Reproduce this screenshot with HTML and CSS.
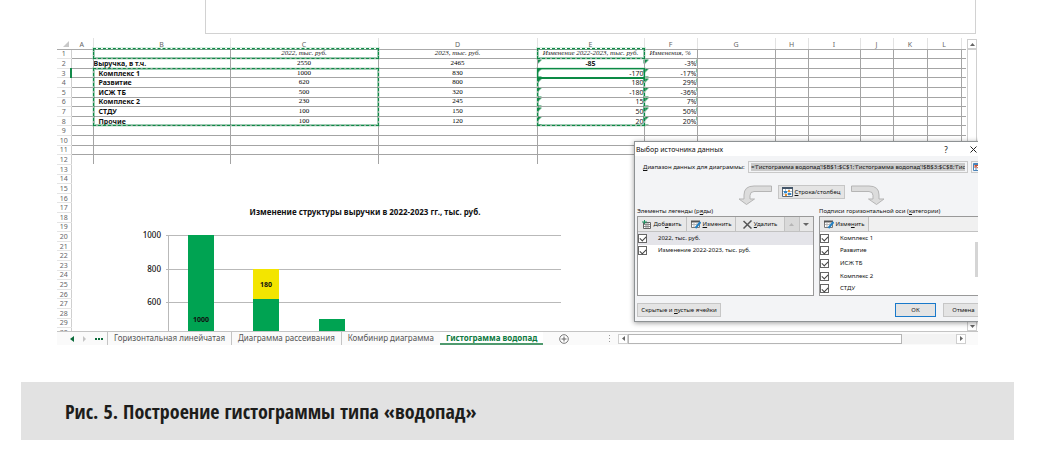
FILE: index.html
```html
<!DOCTYPE html>
<html lang="ru">
<head>
<meta charset="utf-8">
<title>Построение гистограммы типа «водопад»</title>
<link rel="stylesheet" href="styles.css">
</head>
<body>
<div class="formula-area"></div>
<figure class="figure">
  <div class="window">
    <div class="sheet">
      <div class="cells">
        <table class="grid">
          <colgroup><col class="w-n"><col class="w-a"><col class="w-b"><col class="w-c"><col class="w-d"><col class="w-e"><col class="w-f"><col class="w-g"><col class="w-h"><col class="w-i"><col class="w-j"><col class="w-k"><col class="w-l"><col class="w-m"></colgroup>
          <thead>
            <tr><th class="corner"><svg width="6" height="6" viewBox="0 0 6 6"><path d="M6 0v6H0z" fill="#c8c8c8"/></svg></th><th>A</th><th>B</th><th>C</th><th>D</th><th>E</th><th>F</th><th>G</th><th>H</th><th>I</th><th>J</th><th>K</th><th>L</th><th></th></tr>
          </thead>
          <tbody class="ruled">
            <tr><th>1</th><td></td><td></td><td class="head">2022, тыс. руб.</td><td class="head">2023, тыс. руб.</td><td class="head">Изменение 2022-2023, тыс. руб.</td><td class="head start">Изменения, %</td><td></td><td></td><td></td><td></td><td></td><td></td><td></td></tr>
            <tr><th>2</th><td></td><td class="name total">Выручка, в т.ч.</td><td class="num">2550</td><td class="num">2465</td><td class="err mid">-85</td><td class="err val">-3%</td><td></td><td></td><td></td><td></td><td></td><td></td><td></td></tr>
            <tr><th class="current">3</th><td></td><td class="name">Комплекс 1</td><td class="num">1000</td><td class="num">830</td><td class="err val">-170</td><td class="err val">-17%</td><td></td><td></td><td></td><td></td><td></td><td></td><td></td></tr>
            <tr><th>4</th><td></td><td class="name">Развитие</td><td class="num">620</td><td class="num">800</td><td class="err val">180</td><td class="err val">29%</td><td></td><td></td><td></td><td></td><td></td><td></td><td></td></tr>
            <tr><th>5</th><td></td><td class="name">ИСЖ ТБ</td><td class="num">500</td><td class="num">320</td><td class="err val">-180</td><td class="err val">-36%</td><td></td><td></td><td></td><td></td><td></td><td></td><td></td></tr>
            <tr><th>6</th><td></td><td class="name">Комплекс 2</td><td class="num">230</td><td class="num">245</td><td class="err val">15</td><td class="err val">7%</td><td></td><td></td><td></td><td></td><td></td><td></td><td></td></tr>
            <tr><th>7</th><td></td><td class="name">СТДУ</td><td class="num">100</td><td class="num">150</td><td class="err val">50</td><td class="err val">50%</td><td></td><td></td><td></td><td></td><td></td><td></td><td></td></tr>
            <tr><th>8</th><td></td><td class="name">Прочие</td><td class="num">100</td><td class="num">120</td><td class="err val">20</td><td class="err val">20%</td><td></td><td></td><td></td><td></td><td></td><td></td><td></td></tr>
            <tr><th>9</th><td></td><td></td><td></td><td></td><td></td><td></td><td></td><td></td><td></td><td></td><td></td><td></td><td></td></tr>
            <tr><th>10</th><td></td><td></td><td></td><td></td><td></td><td></td><td></td><td></td><td></td><td></td><td></td><td></td><td></td></tr>
            <tr><th>11</th><td></td><td></td><td></td><td></td><td></td><td></td><td></td><td></td><td></td><td></td><td></td><td></td><td></td></tr>
            <tr class="last"><th>12</th><td></td><td></td><td></td><td></td><td></td><td></td><td></td><td></td><td></td><td></td><td></td><td></td><td></td></tr>
          </tbody>
          <tbody>
            <tr><th>13</th><td colspan="13"></td></tr>
            <tr><th>14</th><td colspan="13"></td></tr>
            <tr><th>15</th><td colspan="13"></td></tr>
            <tr><th>16</th><td colspan="13"></td></tr>
            <tr><th>17</th><td colspan="13"></td></tr>
            <tr><th>18</th><td colspan="13"></td></tr>
            <tr><th>19</th><td colspan="13"></td></tr>
            <tr><th>20</th><td colspan="13"></td></tr>
            <tr><th>21</th><td colspan="13"></td></tr>
            <tr><th>22</th><td colspan="13"></td></tr>
            <tr><th>23</th><td colspan="13"></td></tr>
            <tr><th>24</th><td colspan="13"></td></tr>
            <tr><th>25</th><td colspan="13"></td></tr>
            <tr><th>26</th><td colspan="13"></td></tr>
            <tr><th>27</th><td colspan="13"></td></tr>
            <tr><th>28</th><td colspan="13"></td></tr>
            <tr><th>29</th><td colspan="13"></td></tr>
            <tr><th>30</th><td colspan="13"></td></tr>
          </tbody>
        </table>
        <span class="marquee names-head"></span>
        <span class="marquee names-body"></span>
        <span class="marquee values-head"></span>
        <span class="marquee values-body"></span>
        <span class="active-cell"></span>
        <svg class="chart" width="441" height="131" viewBox="0 0 441 131">
          <g fill="#b9b9b9"><rect x="36" y="35" width="395" height="1"/><rect x="36" y="69" width="395" height="1"/><rect x="36" y="102" width="395" height="1"/><rect x="38" y="35" width="1" height="96"/></g>
          <g fill="#00a352"><rect x="58" y="35" width="26" height="96"/><rect x="123" y="99" width="26" height="32"/><rect x="189" y="119" width="26" height="12"/></g>
          <rect x="123" y="69" width="26" height="30" fill="#f3e500"/>
          <text class="chart-title" x="235" y="15">Изменение структуры выручки в 2022-2023 гг., тыс. руб.</text>
          <g class="axis"><text x="31" y="38">1000</text><text x="31" y="72">800</text><text x="31" y="105">600</text></g>
          <g class="bar-label"><text x="71" y="122">1000</text><text x="136" y="87">180</text></g>
        </svg>
      </div>
      <div class="vscroll">
        <button type="button" aria-label="Вверх"><svg width="5" height="3" viewBox="0 0 5 3"><path d="M0 3h5L2.500 0z"/></svg></button>
        <span class="vthumb"></span>
        <button type="button" aria-label="Вниз"><svg width="5" height="3" viewBox="0 0 5 3"><path d="M0 0h5L2.500 3z"/></svg></button>
      </div>
    </div>

    <nav class="tabs">
      <div class="tab-nav">
        <svg width="4" height="6" viewBox="0 0 4 6"><path d="M4 0v6L0 3z" fill="#0b6b3a"/></svg>
        <svg width="3" height="6" viewBox="0 0 3 6"><path d="M0 0v6l3-3z" fill="#c4c4c4"/></svg>
        <svg width="8" height="2" viewBox="0 0 8 2"><path d="M0 0h2v2H0zM3 0h2v2H3zM6 0h2v2H6z" fill="#0b6b3a"/></svg>
      </div>
      <button type="button" class="tab">Горизонтальная линейчатая</button>
      <button type="button" class="tab">Диаграмма рассеивания</button>
      <button type="button" class="tab">Комбинир диаграмма</button>
      <button type="button" class="tab selected">Гистограмма водопад</button>
      <button type="button" class="add" aria-label="Новый лист"><svg width="10" height="10" viewBox="0 0 10 10"><circle cx="5" cy="5" r="4.300" fill="#fff" stroke="#777"/><path d="M5 2.500v5M2.500 5h5" stroke="#666"/></svg></button>
      <svg class="grip" width="2" height="8" viewBox="0 0 2 8"><path d="M0 0h1v1H0zM0 3h1v1H0zM0 6h1v1H0z" fill="#999"/></svg>
      <div class="hscroll">
        <button type="button" aria-label="Влево"><svg width="3" height="5" viewBox="0 0 3 5"><path d="M3 0v5L0 2.500z"/></svg></button>
        <span class="hthumb"></span><span class="htrack"></span>
        <button type="button" aria-label="Вправо"><svg width="3" height="5" viewBox="0 0 3 5"><path d="M0 0v5l3-2.500z"/></svg></button>
      </div>
    </nav>

    <section class="dialog" role="dialog" aria-labelledby="dlg-title">
      <header class="titlebar">
        <h2 id="dlg-title">Выбор источника данных</h2>
        <button type="button" class="help">?</button>
        <button type="button" class="close" aria-label="Закрыть"><svg width="7" height="7" viewBox="0 0 7 7"><path d="M.5.5l6 6M6.500.5l-6 6" stroke="#222" fill="none"/></svg></button>
      </header>
      <div class="range">
        <label for="range"><u>Д</u>иапазон данных для диаграммы:</label>
        <input id="range" type="text" value="='Гистограмма водопад'!$B$1:$C$1;'Гистограмма водопад'!$B$3:$C$8;'Гистограмма водопад'!$E$1">
        <button type="button" class="pick" aria-label="Выбрать диапазон"><svg width="9" height="8" viewBox="0 0 9 8"><path d="M.5.5h8v7h-8z" fill="#fff" stroke="#4a83b8"/><path d="M.5 1.500h8M3 1v6M6 1v6" stroke="#4a83b8"/><path d="M2 2.500l4 3.500M2 2v3M2 2.500h3" stroke="#d4502a" fill="none"/></svg></button>
      </div>
      <div class="switch">
        <svg width="34" height="21" viewBox="0 0 34 21"><path d="M33.500 2v5.500H16q-4 0-4 4V15h4.500L8.500 20.500 1 15h5v-4Q6 2 16 2z" fill="#dcdcdc" stroke="#b5b5b5"/></svg>
        <button type="button" class="btn"><svg width="11" height="10" viewBox="0 0 11 10"><path d="M.5.5h10v9H.5z" fill="#fff" stroke="#5a6b7b"/><path d="M0 1h11" stroke="#44566a" stroke-width="2"/><path d="M1 4.500h9M1 7h9M3.500 2v7M7 2v7" stroke="#a9bac8"/><path d="M2 4h3v2H2zM6 6h3v2H6z" fill="#3187c8"/><path d="M6 3h2v2H6zM3 7h2v2H3z" fill="#e6902e"/></svg><span><u>С</u>трока/столбец</span></button>
        <svg width="34" height="21" viewBox="0 0 34 21"><path d="M.5 2v5.500H18q4 0 4 4V15h-4.500l8 5.500L33 15h-5v-4Q28 2 18 2z" fill="#dcdcdc" stroke="#b5b5b5"/></svg>
      </div>
      <div class="lists">
        <div class="pane left">
          <h3>Элементы легенды (р<u>я</u>ды)</h3>
          <div class="box">
            <div class="tools">
              <button type="button" class="tool wide"><svg width="9" height="9" viewBox="0 0 9 9"><path d="M1.500 2.500h7v6h-7z" fill="#fff" stroke="#666"/><path d="M2 4.500h6M2 6.500h6M4 3v5M6 3v5" stroke="#8b8b8b"/><path d="M0 2h5M2.500 0v4" stroke="#1f9463"/></svg><span>Доб<u>а</u>вить</span></button>
              <button type="button" class="tool wide"><svg width="10" height="9" viewBox="0 0 10 9"><path d="M.5 1.500h8v6h-8z" fill="#fff" stroke="#777"/><path d="M0 1.500h9" stroke="#555" stroke-width="2"/><path d="M3 2v5M6 2v5M1 4.500h7" stroke="#b5b5b5"/><path d="M9.500 2L4.500 8" stroke="#2381c4" stroke-width="2"/></svg><span><u>И</u>зменить</span></button>
              <button type="button" class="tool wide"><svg width="9" height="9" viewBox="0 0 9 9"><path d="M.5 1l8 7.500M8.500.5l-8 8" stroke="#555" stroke-width="1.500" fill="none"/></svg><span><u>У</u>далить</span></button>
              <button type="button" class="tool move" aria-label="Вверх"><svg width="5" height="3" viewBox="0 0 5 3"><path d="M0 3h5L2.500 0z" fill="#b5b5b5"/></svg></button>
              <button type="button" class="tool down" aria-label="Вниз"><svg width="6" height="3" viewBox="0 0 6 3"><path d="M0 0h6L3 3z" fill="#666"/></svg></button>
            </div>
            <div class="rows">
              <label class="picked"><input type="checkbox" checked><span>2022, тыс. руб.</span></label>
              <label><input type="checkbox" checked><span>Изменение 2022-2023, тыс. руб.</span></label>
            </div>
          </div>
        </div>
        <div class="pane right">
          <h3>Подписи горизонтальной оси (<u>к</u>атегории)</h3>
          <div class="box">
            <div class="tools">
              <button type="button" class="tool wide"><svg width="10" height="9" viewBox="0 0 10 9"><path d="M.5 1.500h8v6h-8z" fill="#fff" stroke="#777"/><path d="M0 1.500h9" stroke="#555" stroke-width="2"/><path d="M3 2v5M6 2v5M1 4.500h7" stroke="#b5b5b5"/><path d="M9.500 2L4.500 8" stroke="#2381c4" stroke-width="2"/></svg><span>Изме<u>н</u>ить</span></button>
            </div>
            <div class="rows scrolling">
              <label><input type="checkbox" checked><span>Комплекс 1</span></label>
              <label><input type="checkbox" checked><span>Развитие</span></label>
              <label><input type="checkbox" checked><span>ИСЖ ТБ</span></label>
              <label><input type="checkbox" checked><span>Комплекс 2</span></label>
              <label><input type="checkbox" checked><span>СТДУ</span></label>
            </div>
          </div>
        </div>
      </div>
      <footer class="actions">
        <button type="button" class="btn hidden-cells"><span>Скрытые и <u>п</u>устые ячейки</span></button>
        <button type="button" class="btn ok">ОК</button>
        <button type="button" class="btn cancel">Отмена</button>
      </footer>
    </section>
  </div>
  <figcaption class="caption">Рис. 5. Построение гистограммы типа «водопад»</figcaption>
</figure>
</body>
</html>
```

FILE: styles.css
```css
* { box-sizing: border-box; }

body {
  margin: 0;
  background: #fff;
  color: #222;
  font-family: "Noto Sans", "Open Sans", sans-serif;
  font-size: 7px;
  line-height: 9px;
}

button {
  margin: 0;
  padding: 0;
  border: 0;
  background: none;
  color: inherit;
  font: inherit;
  white-space: nowrap;
}

svg { display: block; flex: none; }

.formula-area {
  height: 34px;
  margin: 0 80px 0 205px;
  border: 1px solid #d2d2d2;
  border-top: 0;
}

.figure { margin: 0; }

.window {
  position: relative;
  margin: 4px 78px 0 57px;
  overflow: hidden;
}

/* Worksheet */
.sheet { display: flex; height: 293px; }

.cells {
  position: relative;
  flex: 1;
  overflow: hidden;
}

.grid {
  width: 100%;
  height: 300px;
  table-layout: fixed;
  border-collapse: collapse;
  line-height: 7px;
}
.grid thead tr { height: 11px; }

.w-n { width: 14px; }
.w-a { width: 22px; }
.w-b { width: 137px; }
.w-c { width: 148px; }
.w-d { width: 159px; }
.w-e { width: 107px; }
.w-f { width: 53px; }
.w-g { width: 78px; }
.w-h { width: 33px; }
.w-i { width: 52px; }
.w-j { width: 33px; }
.w-k { width: 34px; }
.w-l { width: 34px; }
.w-m { width: 5px; }

.grid th, .grid td {
  padding: 0;
  overflow: hidden;
  white-space: nowrap;
}

.grid th {
  border-right: 1px solid #cfcfcf;
  color: #666;
  font-weight: 400;
}

.grid tbody th { border-bottom: 1px solid #e4e4e4; }
.grid thead th {
  padding-top: 2px;
  border-right-color: #e2e2e2;
  border-bottom: 1px solid #aaa;
}
.grid thead .corner { border-right: 0; }
.corner svg { margin-left: auto; margin-right: 2px; }
.grid .current { border-right: 2px solid #138a4a; }

.ruled td { border: 1px solid #a4a4a4; }
.ruled .last td { border-bottom: 0; }

.ruled .head {
  font-family: "Liberation Serif", serif;
  font-style: italic;
  text-align: center;
}
.ruled .start { text-align: left; padding-left: 5px; }
.ruled .num { font-family: "Liberation Serif", serif; color: #000; text-align: center; }
.ruled .name { padding-left: 5px; color: #111; font-weight: 700; }
.ruled .total { padding-left: 0; }
.ruled .val { text-align: right; }
.ruled .mid { text-align: center; font-weight: 700; }
.ruled .err { background: linear-gradient(135deg, #138a4a 3px, transparent 3px); }

/* Source-range marquees lie over the cells */
.marquee {
  position: absolute;
  border: 1px dashed #0c8a45;
  box-shadow: inset 0 0 0 1px #0c8a4566, 0 0 0 1px #8fd0ab55;
}
.names-head { left: 36px; top: 10px; width: 286px; height: 11px; }
.names-body { left: 36px; top: 30px; width: 286px; height: 58px; }
.values-head { left: 480px; top: 10px; width: 108px; height: 11px; }
.values-body { left: 480px; top: 30px; width: 108px; height: 58px; }
.active-cell {
  position: absolute;
  left: 480px;
  top: 30px;
  width: 108px;
  height: 11px;
  border: 1px solid #0c8a45;
  border-bottom-width: 2px;
}

.chart { position: absolute; left: 73px; top: 162px; }
.chart text { font-family: "Noto Sans", sans-serif; fill: #111; }
.chart .chart-title { font-size: 8px; font-weight: 700; text-anchor: middle; }
.chart .axis text { font-size: 8px; font-weight: 500; text-anchor: end; }
.chart .bar-label text { font-size: 7px; font-weight: 700; text-anchor: middle; }

.vscroll {
  display: flex;
  flex-direction: column;
  width: 12px;
  padding: 1px 1px 0;
}
.vscroll button, .hscroll button {
  display: grid;
  place-items: center;
  width: 10px;
  height: 10px;
  border: 1px solid #cfcfcf;
  background: #fff;
  fill: #666;
}
.vthumb { flex: 1; border: 1px solid #cfcfcf; }

/* Sheet tabs */
.tabs {
  display: flex;
  height: 14px;
  border-top: 1px solid #c4c4c4;
  background: #fafafa;
  color: #555;
}
.tab-nav {
  display: flex;
  align-items: center;
  gap: 9px;
  padding: 0 4px 0 13px;
}
.tab {
  padding: 0 6px 2px;
  border-left: 1px solid #c4c4c4;
  font-size: 8px;
  line-height: 11px;
}
.tab.selected {
  padding: 0 6px;
  border-left: 0;
  border-bottom: 2px solid #4f9a6e;
  background: #fff;
  color: #0f7a42;
  font-weight: 700;
}
.add { padding: 0 16px; }
.grip { align-self: center; margin: 0 7px 0 24px; }
.hscroll {
  display: flex;
  flex: 1;
  align-self: center;
  margin-right: 12px;
  background: #f3f3f3;
}
.hthumb { flex: 5; border: 1px solid #b5b5b5; background: #fff; }
.htrack { flex: 1; }

/* Data source dialog */
.dialog {
  position: absolute;
  top: 103px;
  right: -10px;
  width: 354px;
  border: 1px solid #8e9294;
  background: #f3f4f6;
  box-shadow: 0 1px 5px #0006;
  color: #111;
  font-size: 6px;
}
.titlebar {
  display: flex;
  align-items: center;
  height: 14px;
  background: #fff;
}
.titlebar h2 {
  flex: 1;
  margin: 0;
  padding-left: 1px;
  font-size: 7px;
  font-weight: 400;
}
.help { width: 8px; font-size: 8px; }
.close { margin: 0 10px 0 20px; }

.range {
  display: flex;
  align-items: center;
  gap: 3px;
  margin: 5px 3px 0 8px;
}
.range label { width: 102px; white-space: nowrap; }
.range input {
  flex: 1;
  min-width: 0;
  height: 12px;
  padding: 1px 2px;
  border: 1px solid #c9c9c9;
  background: linear-gradient(#cacaca, #cacaca) content-box #fff;
  color: #111;
  font: inherit;
}
.pick { display: grid; place-items: center; width: 13px; height: 12px; border: 1px solid #c9c9c9; }

.btn {
  display: flex;
  align-items: center;
  justify-content: center;
  gap: 2px;
  height: 14px;
  border: 1px solid #c6c6c6;
  background: #e4e4e4;
}

.switch {
  display: flex;
  justify-content: center;
  gap: 6px;
  margin-top: 11px;
}
.switch .btn { width: 67px; margin-top: 1px; }

.lists {
  display: flex;
  gap: 5px;
  margin: 2px 0 0 2px;
}
.pane.left { width: 177px; }
.pane.right { flex: 1; }
.pane h3 { margin: 0; font-size: 6px; font-weight: 400; white-space: nowrap; }
.box { border: 1px solid #999; background: #fff; }
.tools {
  display: flex;
  height: 15px;
  border-bottom: 1px solid #c2c2c2;
  background: #f0f0f0;
}
.tool {
  display: flex;
  align-items: center;
  justify-content: center;
  gap: 2px;
  border-right: 1px solid #c2c2c2;
  background: #e8e8e8;
}
.tool.wide { width: 49px; }
.tool.move { flex: 1; background: #d9d9d9; }
.tool.down { flex: 1; border-right: 0; }
.rows {
  display: grid;
  grid-template-rows: repeat(5, 1fr);
  height: 63px;
}
.rows label { display: flex; align-items: center; gap: 11px; }
.rows .picked { background: #e4e4e9; }
.rows.scrolling {
  background: linear-gradient(#d5d5d5, #d5d5d5) 155px 10px / 8px 35px no-repeat;
}
.rows input {
  appearance: none;
  width: 9px;
  height: 9px;
  margin: 0;
  border: 1px solid #666;
  background: #fff;
  display: grid;
  place-items: center;
}
.rows input:checked::before {
  content: "";
  width: 5px;
  height: 3px;
  border: solid #444;
  border-width: 0 0 1px 1px;
  transform: rotate(-45deg);
}

.actions {
  display: flex;
  gap: 7px;
  padding: 7px 3px 4px 2px;
}
.hidden-cells { width: 84px; margin-right: auto; }
.ok { width: 41px; border-color: #1979ca; }
.cancel { width: 41px; }

/* Caption */
.caption {
  margin: 37px 42px 0 21px;
  padding: 17px 44px 15px;
  background: #e2e2e2;
  color: #1d1d1b;
  font-family: "Open Sans Condensed", "Roboto Condensed", "Liberation Sans Narrow", "Noto Sans", sans-serif;
  font-size: 20px;
  font-weight: 700;
  line-height: 26px;
}
```
